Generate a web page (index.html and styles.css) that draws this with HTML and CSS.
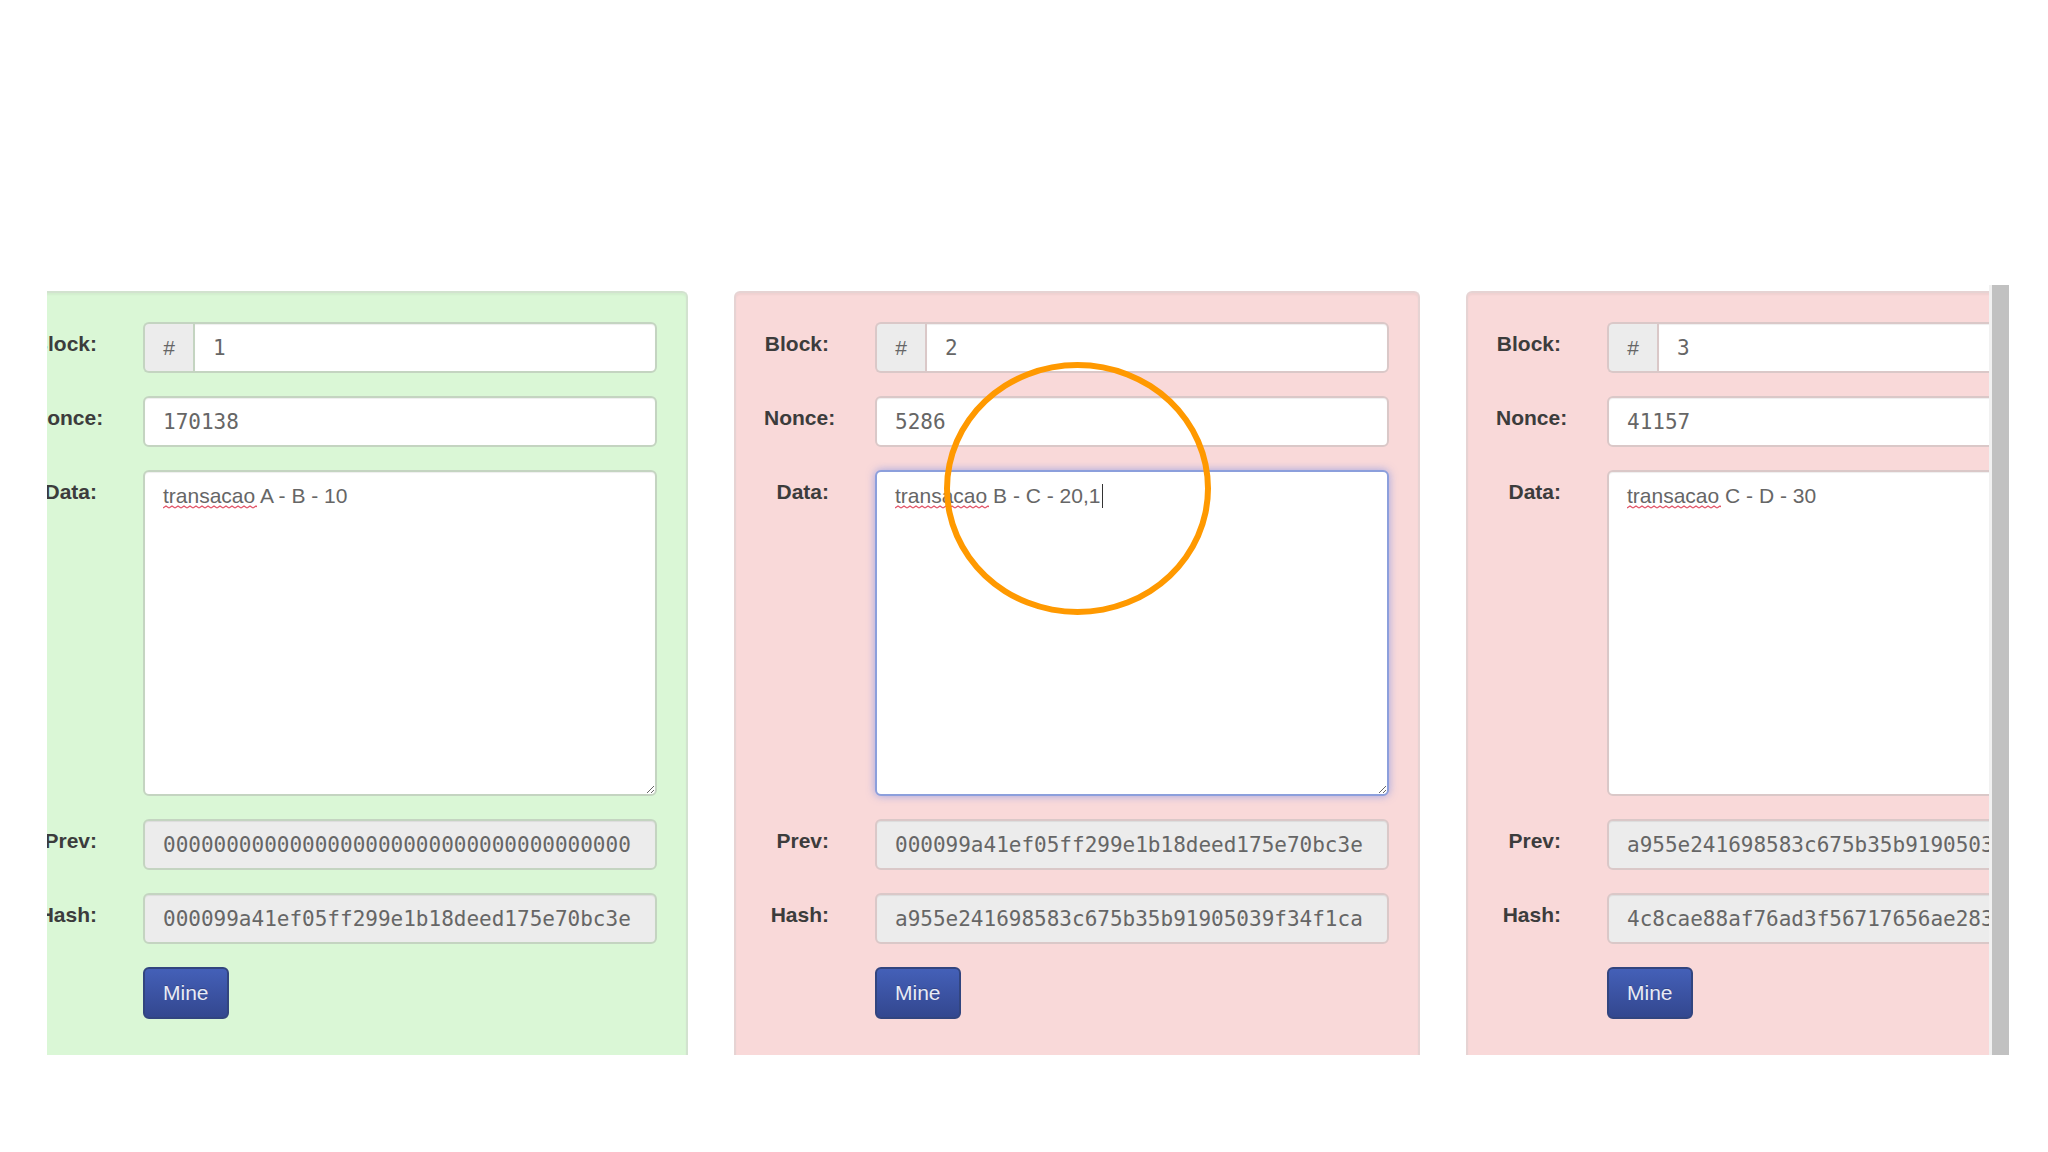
FILE: index.html
```html
<!DOCTYPE html>
<html lang="pt-BR">
<head>
  <meta charset="UTF-8" />
  <meta name="viewport" content="width=device-width, initial-scale=1.0"/>
  <title>Blockchain</title>
  <link rel="stylesheet" href="styles.css">
</head>
<body>
  <main class="viewer">
    <div class="chain-window">
      <div class="chain">
        <form class="block valid">
          <div class="row">
            <label for="number1">Block:</label>
            <div class="input-group">
              <span class="addon">#</span>
              <input class="control" id="number1" type="text" value="1">
            </div>
          </div>
          <div class="row">
            <label for="nonce1">Nonce:</label>
            <input class="control" id="nonce1" type="text" value="170138">
          </div>
          <div class="row">
            <label for="data1">Data:</label>
            <div class="data-wrap">
              <textarea class="control" id="data1" spellcheck="false">transacao A - B - 10</textarea>
              <span class="squiggle"></span>
            </div>
          </div>
          <div class="row">
            <label for="prev1">Prev:</label>
            <input class="control" id="prev1" type="text" value="0000000000000000000000000000000000000" readonly>
          </div>
          <div class="row">
            <label for="hash1">Hash:</label>
            <input class="control" id="hash1" type="text" value="000099a41ef05ff299e1b18deed175e70bc3e" readonly>
          </div>
          <div class="row actions">
            <button class="btn" type="button">Mine</button>
          </div>
        </form>

        <form class="block invalid">
          <div class="row">
            <label for="number2">Block:</label>
            <div class="input-group">
              <span class="addon">#</span>
              <input class="control" id="number2" type="text" value="2">
            </div>
          </div>
          <div class="row">
            <label for="nonce2">Nonce:</label>
            <input class="control" id="nonce2" type="text" value="5286">
          </div>
          <div class="row">
            <label for="data2">Data:</label>
            <div class="data-wrap">
              <textarea class="control active" id="data2" spellcheck="false">transacao B - C - 20,1</textarea>
              <span class="squiggle"></span>
              <span class="caret"></span>
            </div>
          </div>
          <div class="row">
            <label for="prev2">Prev:</label>
            <input class="control" id="prev2" type="text" value="000099a41ef05ff299e1b18deed175e70bc3e" readonly>
          </div>
          <div class="row">
            <label for="hash2">Hash:</label>
            <input class="control" id="hash2" type="text" value="a955e241698583c675b35b91905039f34f1ca" readonly>
          </div>
          <div class="row actions">
            <button class="btn" type="button">Mine</button>
          </div>
          <div class="highlight"></div>
        </form>

        <form class="block invalid">
          <div class="row">
            <label for="number3">Block:</label>
            <div class="input-group">
              <span class="addon">#</span>
              <input class="control" id="number3" type="text" value="3">
            </div>
          </div>
          <div class="row">
            <label for="nonce3">Nonce:</label>
            <input class="control" id="nonce3" type="text" value="41157">
          </div>
          <div class="row">
            <label for="data3">Data:</label>
            <div class="data-wrap">
              <textarea class="control" id="data3" spellcheck="false">transacao C - D - 30</textarea>
              <span class="squiggle"></span>
            </div>
          </div>
          <div class="row">
            <label for="prev3">Prev:</label>
            <input class="control" id="prev3" type="text" value="a955e241698583c675b35b91905039f34f1ca" readonly>
          </div>
          <div class="row">
            <label for="hash3">Hash:</label>
            <input class="control" id="hash3" type="text" value="4c8cae88af76ad3f56717656ae283" readonly>
          </div>
          <div class="row actions">
            <button class="btn" type="button">Mine</button>
          </div>
        </form>
      </div>
    </div>
    <div class="scrollbar"></div>
  </main>
</body>
</html>
```
FILE: styles.css
```css
* {
  box-sizing: border-box;
}

body {
  margin: 0;
  background: #fff;
  color: #3c3c3c;
  font-family: "Liberation Sans", Arial, sans-serif;
  font-size: 21px;
  line-height: 30px;
}

.viewer {
  display: flex;
  margin: 285px 39px 0 47px;
}

.chain-window {
  flex: 1;
  min-width: 0;
  overflow: hidden;
  padding-top: 6px;
}

/* scrolled a little, so the first block is cut on the left */
.chain {
  display: flex;
  gap: 46px;
  margin-left: -45px;
}

.scrollbar {
  width: 20px;
  background: #c1c1c1;
  border-left: 3px solid #f1f1f1;
}

.block {
  position: relative;
  flex: 0 0 686px;
  display: flex;
  flex-direction: column;
  gap: 23px;
  padding: 29px 29px 36px 28px;
  border: 2px solid #d8d8d4;
  border-bottom: 0;
  border-radius: 6px 6px 0 0;
  box-shadow: inset 0 2px 2px rgba(0, 0, 0, 0.04);
}

.valid {
  background: #daf7d6;
  border-color: #d2e2cf;
}

.invalid {
  background: #f9d9d9;
  border-color: #e6d3d3;
}

.row {
  display: flex;
  align-items: flex-start;
  gap: 46px;
}

/* a wider label runs over to the right */
.row label {
  flex: 0 0 65px;
  min-width: 0;
  padding-top: 7px;
  font-weight: bold;
  text-align: right;
}

.control {
  flex: 1;
  display: block;
  width: 100%;
  min-width: 0;
  height: 51px;
  margin: 0;
  padding: 9px 18px 8px;
  border: 2px solid #ccc;
  border-radius: 6px;
  background: #fff;
  box-shadow: inset 0 1px 1px rgba(0, 0, 0, 0.07);
  color: #666;
  font-family: "DejaVu Sans Mono", monospace;
  font-size: 21px;
  line-height: 30px;
  outline: none;
}

.control[readonly] {
  background: #ececec;
}

.valid .control,
.valid .addon {
  border-color: #c4d4c1;
}

.invalid .control,
.invalid .addon {
  border-color: #dac8c8;
}

textarea.control {
  height: 326px;
  font-family: "Liberation Sans", Arial, sans-serif;
  resize: both;
}

.invalid .control.active {
  border-color: #8c9fdc;
  box-shadow: 0 0 8px rgba(102, 130, 233, 0.6);
}

.input-group {
  flex: 1;
  display: flex;
  min-width: 0;
}

.addon {
  flex: 0 0 50px;
  height: 51px;
  padding: 9px 0 8px;
  border: 2px solid #ccc;
  border-right: 0;
  border-radius: 6px 0 0 6px;
  background: #ececec;
  color: #666;
  text-align: center;
}

.input-group .control {
  border-radius: 0 6px 6px 0;
}

.data-wrap {
  position: relative;
  flex: 1;
  min-width: 0;
}

/* spell checker underline below the first word */
.squiggle {
  position: absolute;
  top: 35px;
  left: 20px;
  width: 94px;
  height: 4px;
  background: url("data:image/svg+xml,%3Csvg xmlns='http://www.w3.org/2000/svg' width='6' height='4'%3E%3Cpath d='M0 3L3 1L6 3' fill='none' stroke='%23e2566a' stroke-width='1.4'/%3E%3C/svg%3E") repeat-x;
  pointer-events: none;
}

.caret {
  position: absolute;
  top: 14px;
  left: 227px;
  width: 1px;
  height: 24px;
  background: #333;
}

.actions {
  padding-left: 111px;
}

.btn {
  height: 52px;
  padding: 8px 18px;
  border: 2px solid #32457f;
  border-radius: 6px;
  background: linear-gradient(#4460b8, #33478f);
  color: #e8ebf5;
  font-family: inherit;
  font-size: 21px;
  line-height: 30px;
  text-shadow: 0 -1px 0 rgba(0, 0, 0, 0.2);
  cursor: pointer;
}

/* ring drawn round the changed transaction */
.highlight {
  position: absolute;
  top: 69px;
  left: 208px;
  width: 267px;
  height: 253px;
  border: 6px solid #ff9900;
  border-radius: 50%;
  pointer-events: none;
}
```
